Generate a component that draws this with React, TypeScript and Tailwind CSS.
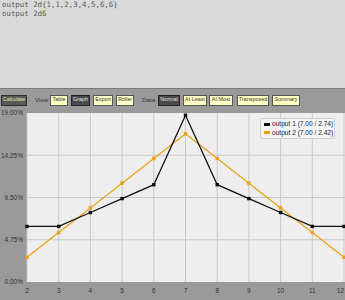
import React from "react";

const o1 = [4, 4, 5, 6, 7, 12, 7, 6, 5, 4, 4].map((c) => (c / 64) * 100);
const o2 = [1, 2, 3, 4, 5, 6, 5, 4, 3, 2, 1].map((c) => (c / 36) * 100);

const X0 = 27;
const DX = 31.7;
const TOP = 5;
const H = 169;
const xs = (i: number) => X0 + i * DX;
const ys = (p: number) => TOP + ((19 - p) / 19) * H;

function Btn({ label, kind, w, ml }: { label: string; kind: "calc" | "sel" | "off"; w: number; ml: number }) {
  const cls =
    kind === "calc"
      ? "bg-[#595959] text-[#e6e6b8] border-[#2e2e2e]"
      : kind === "sel"
      ? "bg-[#4a4a4a] text-[#e0e0e0] border-[#222222]"
      : "bg-[#ffffc4] text-[#333333] border-[#555555]";
  return (
    <div
      className={`h-[11px] border flex items-center justify-center leading-none text-[5.4px] whitespace-nowrap overflow-visible ${cls}`}
      style={{ width: w, marginLeft: ml }}
    >
      {label}
    </div>
  );
}

function Label({ text, ml, w }: { text: string; ml: number; w: number }) {
  return (
    <div className="text-[6.2px] text-[#333333] leading-none" style={{ marginLeft: ml, width: w }}>
      {text}
    </div>
  );
}

export default function App() {
  const line = (d: number[]) => d.map((p, i) => `${i === 0 ? "M" : "L"}${xs(i).toFixed(1)},${ys(p).toFixed(1)}`).join(" ");
  return (
    <div className="w-[345px] h-[300px] overflow-hidden bg-[#9a9a9a] flex flex-col" style={{ fontFamily: '"Liberation Sans", Arial, sans-serif' }}>
      <div className="h-[89px] shrink-0 bg-[#d9d9d9] border-b border-[#7a7a7a] px-[2px] pt-[1px] text-[7.4px] leading-[8.5px] text-[#5a5a5a]" style={{ fontFamily: '"DejaVu Sans Mono", monospace' }}>
        <div>output 2d{"{"}1,1,2,3,4,5,6,6{"}"}</div>
        <div>output 2d6</div>
      </div>
      <div className="h-[19px] shrink-0 flex items-center pt-[3px]">
        <Btn label="Calculate" kind="calc" w={26} ml={1} />
        <Label text="View" ml={8} w={13} />
        <Btn label="Table" kind="off" w={18} ml={2} />
        <Btn label="Graph" kind="sel" w={19} ml={3} />
        <Btn label="Export" kind="off" w={20} ml={3} />
        <Btn label="Roller" kind="off" w={18} ml={3} />
        <Label text="Data" ml={8} w={13} />
        <Btn label="Normal" kind="sel" w={22} ml={3} />
        <Btn label="At Least" kind="off" w={24} ml={3} />
        <Btn label="At Most" kind="off" w={24} ml={2} />
        <Btn label="Transposed" kind="off" w={32} ml={4} />
        <Btn label="Summary" kind="off" w={28} ml={3} />
      </div>
      <div className="relative flex-1">
        <svg width="345" height="192" className="block">
          <rect x={X0} y={TOP} width={345 - X0} height={H} fill="#eeeeee" />
          {Array.from({ length: 11 }, (_, i) => (
            <line key={"v" + i} x1={xs(i)} x2={xs(i)} y1={TOP} y2={TOP + H} stroke="#c9c9c9" strokeWidth="1" />
          ))}
          {[1, 2, 3].map((k) => (
            <line key={"h" + k} x1={X0} x2={345} y1={TOP + (k * H) / 4} y2={TOP + (k * H) / 4} stroke="#c9c9c9" strokeWidth="1" />
          ))}
          {["19.00%", "14.25%", "9.50%", "4.75%", "0.00%"].map((t, k) => (
            <text key={t} x={23} y={TOP + (k * H) / 4 + 2.3} textAnchor="end" fontSize="6.5" fill="#333333">
              {t}
            </text>
          ))}
          {Array.from({ length: 11 }, (_, i) => (
            <text
              key={"x" + i}
              x={i === 10 ? 344 : xs(i)}
              y={185}
              textAnchor={i === 10 ? "end" : "middle"}
              fontSize="6.5"
              fill="#333333"
            >
              {i + 2}
            </text>
          ))}
          <path d={line(o2)} fill="none" stroke="#e8a21a" strokeWidth="1.3" />
          {o2.map((p, i) => (
            <rect key={"m2" + i} x={xs(i) - 1.7} y={ys(p) - 1.7} width="3.4" height="3.4" fill="#e8a21a" />
          ))}
          <path d={line(o1)} fill="none" stroke="#111111" strokeWidth="1.3" />
          {o1.map((p, i) => (
            <rect key={"m1" + i} x={xs(i) - 1.7} y={ys(p) - 1.7} width="3.4" height="3.4" fill="#111111" />
          ))}
        </svg>
        <div className="absolute left-[260px] top-[10px] w-[75px] h-[21px] bg-[#f3f3f3] border border-[#cfcfcf] rounded-[2px] flex flex-col justify-center gap-[2px] pl-[3px] text-[6.6px] leading-none text-[#222222]">
          <div className="flex items-center gap-[2px]">
            <span className="inline-block w-[6px] h-[3px] bg-[#111111]" />
            <span>output 1 (7.00 / 2.74)</span>
          </div>
          <div className="flex items-center gap-[2px]">
            <span className="inline-block w-[6px] h-[3px] bg-[#e8a21a]" />
            <span>output 2 (7.00 / 2.42)</span>
          </div>
        </div>
      </div>
    </div>
  );
}
